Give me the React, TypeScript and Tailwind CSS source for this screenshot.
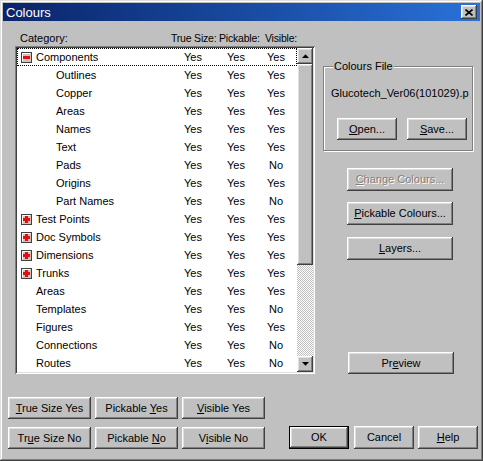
import type { ReactNode } from 'react';

type Val = 'Yes' | 'No';

interface Row {
  name: string;
  level: 0 | 1;
  exp?: 'plus' | 'minus';
  v: [Val, Val, Val];
  focus?: boolean;
}

const rows: Row[] = [
  { name: 'Components', level: 0, exp: 'minus', v: ['Yes', 'Yes', 'Yes'], focus: true },
  { name: 'Outlines', level: 1, v: ['Yes', 'Yes', 'Yes'] },
  { name: 'Copper', level: 1, v: ['Yes', 'Yes', 'Yes'] },
  { name: 'Areas', level: 1, v: ['Yes', 'Yes', 'Yes'] },
  { name: 'Names', level: 1, v: ['Yes', 'Yes', 'Yes'] },
  { name: 'Text', level: 1, v: ['Yes', 'Yes', 'Yes'] },
  { name: 'Pads', level: 1, v: ['Yes', 'Yes', 'No'] },
  { name: 'Origins', level: 1, v: ['Yes', 'Yes', 'Yes'] },
  { name: 'Part Names', level: 1, v: ['Yes', 'Yes', 'No'] },
  { name: 'Test Points', level: 0, exp: 'plus', v: ['Yes', 'Yes', 'Yes'] },
  { name: 'Doc Symbols', level: 0, exp: 'plus', v: ['Yes', 'Yes', 'Yes'] },
  { name: 'Dimensions', level: 0, exp: 'plus', v: ['Yes', 'Yes', 'Yes'] },
  { name: 'Trunks', level: 0, exp: 'plus', v: ['Yes', 'Yes', 'Yes'] },
  { name: 'Areas', level: 0, v: ['Yes', 'Yes', 'Yes'] },
  { name: 'Templates', level: 0, v: ['Yes', 'Yes', 'No'] },
  { name: 'Figures', level: 0, v: ['Yes', 'Yes', 'Yes'] },
  { name: 'Connections', level: 0, v: ['Yes', 'Yes', 'No'] },
  { name: 'Routes', level: 0, v: ['Yes', 'Yes', 'No'] },
];

const raised =
  'bg-[#c0c0c0] shadow-[inset_-1px_-1px_0_#404040,inset_1px_1px_0_#fff,inset_-2px_-2px_0_#808080,inset_2px_2px_0_#dfdfdf]';

function WinButton({
  children,
  className = '',
  disabled,
  isDefault,
}: {
  children: ReactNode;
  className?: string;
  disabled?: boolean;
  isDefault?: boolean;
}) {
  return (
    <div className={`${isDefault ? 'border border-black' : ''} ${className}`}>
      <div
        className={`${raised} w-full h-full flex items-center justify-center text-[11px] whitespace-nowrap ${
          disabled ? 'text-[#808080] [text-shadow:1px_1px_0_#fff]' : 'text-black'
        }`}
      >
        <span>{children}</span>
      </div>
    </div>
  );
}

function ExpandBox({ kind }: { kind: 'plus' | 'minus' }) {
  return (
    <svg width="11" height="11" viewBox="0 0 11 11" className="shrink-0">
      <rect x="0.5" y="0.5" width="10" height="10" fill="#c8c4c0" stroke="#404040" />
      <path d="M1.5 9.5V1.5H9.5" fill="none" stroke="#fff" />
      <rect x="2" y="4" width="7" height="3" fill="#e01010" />
      {kind === 'plus' && <rect x="4" y="2" width="3" height="7" fill="#e01010" />}
    </svg>
  );
}

function Arrow({ dir }: { dir: 'up' | 'down' }) {
  return (
    <svg width="7" height="4" viewBox="0 0 7 4">
      {dir === 'up' ? (
        <polygon points="0,4 7,4 3.5,0.2" fill="#000" />
      ) : (
        <polygon points="0,0 7,0 3.5,3.8" fill="#000" />
      )}
    </svg>
  );
}

function U({ children }: { children: ReactNode }) {
  return <span className="underline underline-offset-[1px]">{children}</span>;
}

export default function App() {
  return (
    <div className="w-[483px] h-[461px] bg-[#c0c0c0] p-[3px] flex flex-col font-['Liberation_Sans',Arial,sans-serif] shadow-[inset_-1px_-1px_0_#404040,inset_1px_1px_0_#dfdfdf,inset_-2px_-2px_0_#808080,inset_2px_2px_0_#fff] overflow-hidden select-none">
      {/* title bar */}
      <div className="h-[18px] flex items-center bg-linear-to-r from-[#0a246a] to-[#2a72d8] pl-[3px] pr-[3px]">
        <span className="text-white text-[13px] leading-none flex-1">Colours</span>
        <div className={`${raised} w-[16px] h-[14px] flex items-center justify-center`}>
          <svg width="8" height="7" viewBox="0 0 8 7">
            <path d="M0.5 0.5L7.5 6.5M7.5 0.5L0.5 6.5" stroke="#000" strokeWidth="1.6" />
          </svg>
        </div>
      </div>

      {/* main area */}
      <div className="flex pt-[10px] pl-[12px]">
        {/* left column */}
        <div className="flex flex-col w-[300px]">
          <div className="h-[15px] flex items-start text-[10.5px] leading-[14px] text-black whitespace-nowrap tracking-[-0.2px]">
            <span className="pl-[5px] w-[156px] shrink-0 text-[11px] tracking-normal">Category:</span>
            <span className="w-[48px] shrink-0">True Size:</span>
            <span className="w-[46px] shrink-0">Pickable:</span>
            <span className="shrink-0">Visible:</span>
          </div>
          <div className="h-[328px] p-[2px] bg-white shadow-[inset_1px_1px_0_#808080,inset_-1px_-1px_0_#fff,inset_2px_2px_0_#404040,inset_-2px_-2px_0_#dfdfdf] flex">
            <div className="flex-1 flex flex-col bg-white">
              {rows.map((r, i) => (
                <div
                  key={i}
                  className={`h-[18px] flex items-center text-[11px] text-black whitespace-nowrap ${
                    r.focus ? 'outline-1 outline-dotted outline-black -outline-offset-1' : ''
                  }`}
                >
                  <div
                    className={`w-[159px] shrink-0 flex items-center ${
                      r.level === 1 ? 'pl-[39px]' : r.exp ? 'pl-[4px]' : 'pl-[19px]'
                    }`}
                  >
                    {r.exp && <ExpandBox kind={r.exp} />}
                    <span className={r.exp ? 'ml-[4px]' : ''}>{r.name}</span>
                  </div>
                  <span className="w-[34px] text-center">{r.v[0]}</span>
                  <span className="w-[34px] text-center ml-[9px]">{r.v[1]}</span>
                  <span className="w-[34px] text-center ml-[6px]">{r.v[2]}</span>
                </div>
              ))}
            </div>
            {/* scrollbar */}
            <div className="w-[16px] flex flex-col">
              <div className={`${raised} h-[16px] flex items-center justify-center`}>
                <Arrow dir="up" />
              </div>
              <div className={`${raised} h-[201px]`} />
              <div className="flex-1 [background:repeating-conic-gradient(#fff_0%_25%,#c0c0c0_0%_50%)_0_0/2px_2px]" />
              <div className={`${raised} h-[16px] flex items-center justify-center`}>
                <Arrow dir="down" />
              </div>
            </div>
          </div>
        </div>

        {/* right column */}
        <div className="ml-[8px] flex flex-col">
          <div className="relative mt-[35px] w-[150px] border border-[#808080] shadow-[1px_1px_0_#fff,inset_1px_1px_0_#fff] pt-[20px] pb-[10px]">
            <span className="absolute -top-[7px] left-[9px] bg-[#c0c0c0] px-[1px] text-[11px] leading-[13px]">
              Colours File
            </span>
            <div className="pl-[7px] text-[11px] leading-[13px] whitespace-nowrap overflow-hidden">
              Glucotech_Ver06(101029).p
            </div>
            <div className="flex mt-[18px] ml-[13px]">
              <WinButton className="w-[60px] h-[22px]">
                <U>O</U>pen...
              </WinButton>
              <WinButton className="w-[60px] h-[22px] ml-[10px]">
                <U>S</U>ave...
              </WinButton>
            </div>
          </div>
          <WinButton disabled className="w-[106px] h-[23px] ml-[24px] mt-[17px]">
            <U>C</U>hange Colours...
          </WinButton>
          <WinButton className="w-[106px] h-[23px] ml-[24px] mt-[11px]">
            <U>P</U>ickable Colours...
          </WinButton>
          <WinButton className="w-[106px] h-[23px] ml-[24px] mt-[12px]">
            <U>L</U>ayers...
          </WinButton>
          <WinButton className="w-[106px] h-[22px] ml-[25px] mt-[92px]">
            Pr<U>e</U>view
          </WinButton>
        </div>
      </div>

      {/* bottom buttons */}
      <div className="flex items-end mt-[23px] pl-[5px]">
        <div className="grid grid-cols-[83px_83px_83px] gap-x-[4px] gap-y-[8px]">
          <WinButton className="h-[22px]">
            <U>T</U>rue Size Yes
          </WinButton>
          <WinButton className="h-[22px]">
            Pickable <U>Y</U>es
          </WinButton>
          <WinButton className="h-[22px]">
            <U>V</U>isible Yes
          </WinButton>
          <WinButton className="h-[22px]">
            Tr<U>u</U>e Size No
          </WinButton>
          <WinButton className="h-[22px]">
            Pickable <U>N</U>o
          </WinButton>
          <WinButton className="h-[22px]">
            V<U>i</U>sible No
          </WinButton>
        </div>
        <WinButton isDefault className="w-[60px] h-[23px] ml-[24px]">
          OK
        </WinButton>
        <WinButton className="w-[60px] h-[23px] ml-[5px]">Cancel</WinButton>
        <WinButton className="w-[60px] h-[23px] ml-[4px]">
          <U>H</U>elp
        </WinButton>
      </div>
    </div>
  );
}
